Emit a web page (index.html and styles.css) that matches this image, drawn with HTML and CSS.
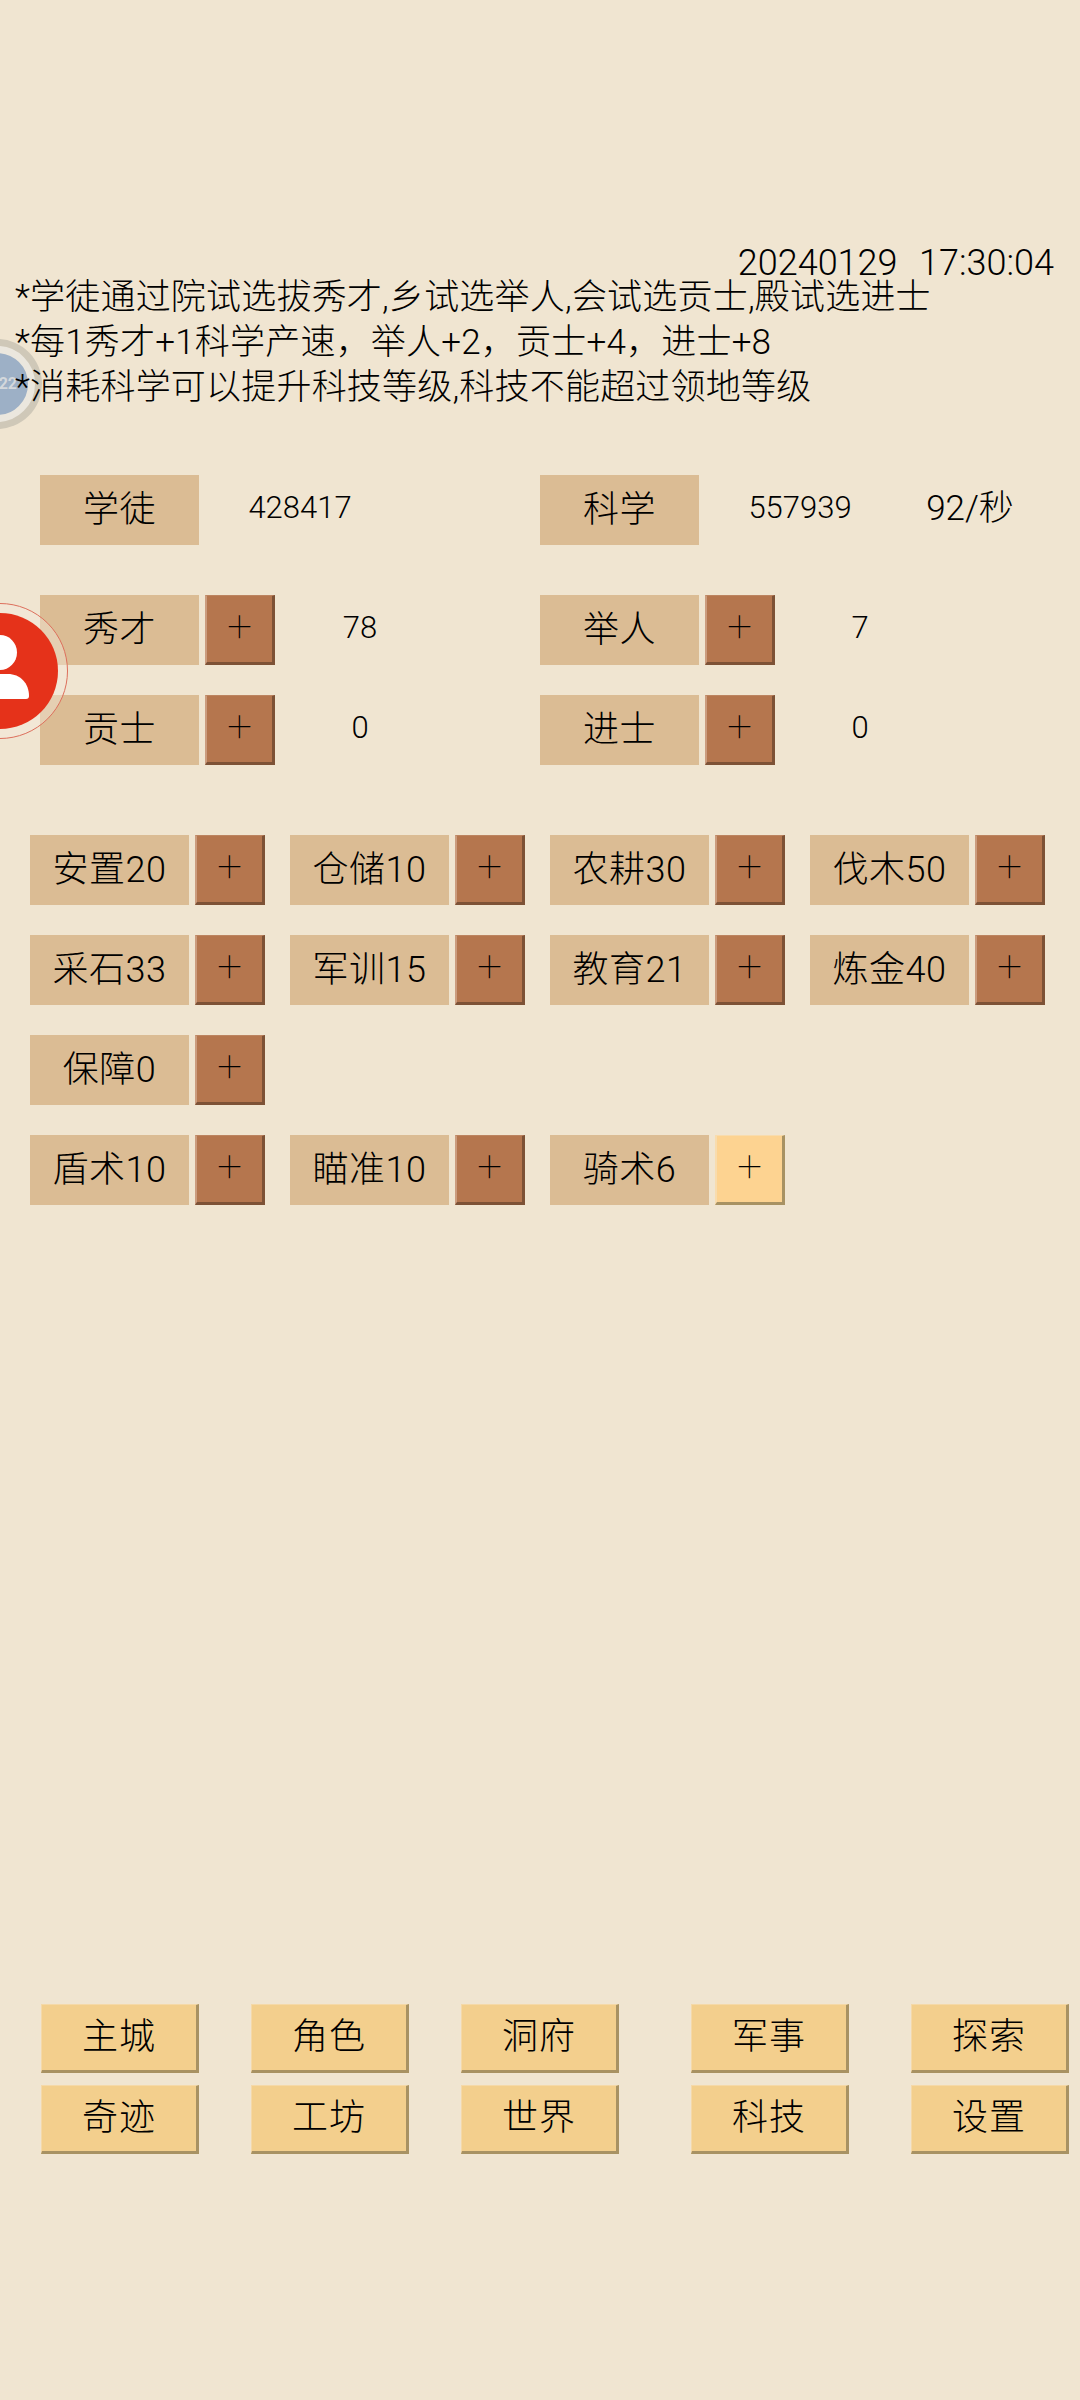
FILE: index.html
```html
<!DOCTYPE html>
<html lang="zh-CN">
<head>
  <meta charset="UTF-8" />
  <meta name="viewport" content="width=device-width, initial-scale=1.0" />
  <title>科技</title>
  <link rel="stylesheet" href="styles.css">
</head>
<body>
  <div class="clock">20240129&nbsp;&nbsp;17:30:04</div>

  <div class="notes">
    <p>*学徒通过院试选拔秀才,乡试选举人,会试选贡士,殿试选进士</p>
    <p>*每1秀才+1科学产速，举人+2，贡士+4，进士+8</p>
    <p>*消耗科学可以提升科技等级,科技不能超过领地等级</p>
  </div>

  <!-- Students and science -->
  <div class="stats first">
    <div class="stat">
      <div class="label">学徒</div>
      <div class="value wide">428417</div>
    </div>
    <div class="stat">
      <div class="label">科学</div>
      <div class="value wide">557939</div>
      <div class="value rate">92/秒</div>
    </div>
  </div>

  <div class="stats second">
    <div class="stat">
      <div class="label">秀才</div>
      <div class="plus">+</div>
      <div class="value">78</div>
    </div>
    <div class="stat">
      <div class="label">举人</div>
      <div class="plus">+</div>
      <div class="value">7</div>
    </div>
  </div>

  <div class="stats third">
    <div class="stat">
      <div class="label">贡士</div>
      <div class="plus">+</div>
      <div class="value">0</div>
    </div>
    <div class="stat">
      <div class="label">进士</div>
      <div class="plus">+</div>
      <div class="value">0</div>
    </div>
  </div>

  <!-- Tech levels -->
  <div class="skills">
    <div class="skill"><div class="label">安置20</div><div class="plus">+</div></div>
    <div class="skill"><div class="label">仓储10</div><div class="plus">+</div></div>
    <div class="skill"><div class="label">农耕30</div><div class="plus">+</div></div>
    <div class="skill"><div class="label">伐木50</div><div class="plus">+</div></div>
    <div class="skill"><div class="label">采石33</div><div class="plus">+</div></div>
    <div class="skill"><div class="label">军训15</div><div class="plus">+</div></div>
    <div class="skill"><div class="label">教育21</div><div class="plus">+</div></div>
    <div class="skill"><div class="label">炼金40</div><div class="plus">+</div></div>
    <div class="skill row-end"><div class="label">保障0</div><div class="plus">+</div></div>
    <div class="skill"><div class="label">盾术10</div><div class="plus">+</div></div>
    <div class="skill"><div class="label">瞄准10</div><div class="plus">+</div></div>
    <div class="skill"><div class="label">骑术6</div><div class="plus ready">+</div></div>
  </div>

  <!-- Bottom menu -->
  <div class="menu">
    <div class="menu-btn">主城</div>
    <div class="menu-btn">角色</div>
    <div class="menu-btn">洞府</div>
    <div class="menu-btn">军事</div>
    <div class="menu-btn">探索</div>
    <div class="menu-btn">奇迹</div>
    <div class="menu-btn">工坊</div>
    <div class="menu-btn">世界</div>
    <div class="menu-btn">科技</div>
    <div class="menu-btn">设置</div>
  </div>

  <!-- Floating bubbles stuck to the left edge -->
  <div class="bubble-gray"><div class="bubble-gray-inner">22</div></div>
  <div class="bubble-red">
    <svg class="bubble-person" viewBox="0 0 60 64">
      <ellipse cx="30" cy="17.5" rx="17" ry="17.5" fill="#fff" />
      <path d="M4 64 Q1 64 1 61 C1 48 10 39 22 39 H38 C50 39 59 48 59 61 Q59 64 56 64 Z" fill="#fff" />
    </svg>
  </div>
</body>
</html>
```

FILE: styles.css
```css
/* Overall page */
body {
  margin: 0;
  height: 2400px;
  overflow: hidden;
  position: relative;
  background-color: #f0e5d1;
  color: #000;
  font-family: Roboto, "Noto Sans CJK SC", sans-serif;
  font-weight: 300;
}

/* Date and time, top right */
.clock {
  padding: 243px 26px 0 0;
  height: 40px;
  margin-bottom: -8px;
  line-height: 40px;
  font-size: 36px;
  word-spacing: 2px;
  text-align: right;
}

/* Three lines of help text, they sit above the gray bubble */
.notes {
  position: relative;
  z-index: 2;
  padding-left: 15px;
  font-size: 35px;
  letter-spacing: 0.2px;
  line-height: 45px;
}
.notes p {
  margin: 0;
  white-space: nowrap;
}

/* Stat rows */
.stats {
  display: grid;
  grid-template-columns: 500px 500px;
  padding-left: 40px;
}
.stats.first { margin-top: 65px; }
.stats.second { margin-top: 50px; }
.stats.third { margin-top: 30px; }
.stat {
  display: flex;
  align-items: center;
}
.label {
  box-sizing: border-box;
  width: 159px;
  height: 70px;
  flex: none;
  padding-bottom: 8px;
  display: flex;
  justify-content: center;
  align-items: center;
  background-color: #dbbc94;
  font-size: 36px;
  letter-spacing: 0.5px;
}
.value {
  box-sizing: border-box;
  width: 170px;
  padding-bottom: 5px;
  text-align: center;
  font-size: 31px;
}
.value.wide { width: 202px; }
.value.rate { width: 138px; padding-bottom: 11px; font-size: 35px; }

/* Square plus buttons */
.plus {
  box-sizing: border-box;
  width: 70px;
  height: 70px;
  flex: none;
  margin-left: 6px;
  padding-bottom: 6px;
  display: flex;
  justify-content: center;
  align-items: center;
  background-color: #b5764e;
  border-style: solid;
  border-width: 1px 3px 3px 2px;
  border-color: #bc8460 #7d5236 #7d5236 #cb9c7e;
  font-size: 44px;
  font-weight: 100;
}
.plus.ready {
  background-color: #fdd391;
  border-color: #f8dcae #a89263 #a89263 #f8dcae;
}

/* Tech grid */
.skills {
  display: grid;
  grid-template-columns: repeat(4, 235px);
  column-gap: 25px;
  row-gap: 30px;
  padding-left: 30px;
  margin-top: 70px;
}
.skill {
  display: flex;
}
.skill.row-end {
  grid-column: 1 / -1;
}

/* Bottom menu */
.menu {
  display: grid;
  grid-template-columns: 210px 210px 230px 220px 158px;
  row-gap: 12px;
  padding-left: 41px;
  margin-top: 799px;
}
.menu-btn {
  box-sizing: border-box;
  width: 158px;
  height: 69px;
  padding-bottom: 9px;
  display: flex;
  justify-content: center;
  align-items: center;
  background-color: #f3cf8d;
  border-style: solid;
  border-width: 1px 3px 3px 1px;
  border-color: #f5d9a8 #a89263 #a89263 #f5d9a8;
  font-size: 36px;
  letter-spacing: 1px;
}

/* Gray floating bubble, half off the screen */
.bubble-gray {
  position: absolute;
  left: -48px;
  top: 339px;
  width: 90px;
  height: 90px;
  border-radius: 50%;
  background-color: #cfc8b8;
  display: flex;
  justify-content: center;
  align-items: center;
}
.bubble-gray-inner {
  box-sizing: border-box;
  width: 76px;
  height: 76px;
  padding-right: 11px;
  border-radius: 50%;
  border: 7px solid #ebe7de;
  background-color: #9db0c6;
  color: #d4d8dc;
  font-size: 16px;
  font-weight: 700;
  line-height: 62px;
  text-align: right;
}

/* Red contact bubble */
.bubble-red {
  position: absolute;
  left: -68px;
  top: 603px;
  box-sizing: border-box;
  width: 136px;
  height: 136px;
  border-radius: 50%;
  border: 1.5px solid #dd6f5c;
  background-color: rgba(245, 236, 222, 0.4);
  display: flex;
  justify-content: center;
  align-items: center;
}
.bubble-red::before {
  content: '';
  position: absolute;
  left: 8.5px;
  top: 8.5px;
  width: 116px;
  height: 116px;
  border-radius: 50%;
  background-color: #e5321a;
}
.bubble-person {
  position: relative;
  width: 60px;
  height: 64px;
  margin-bottom: 8px;
}
```
